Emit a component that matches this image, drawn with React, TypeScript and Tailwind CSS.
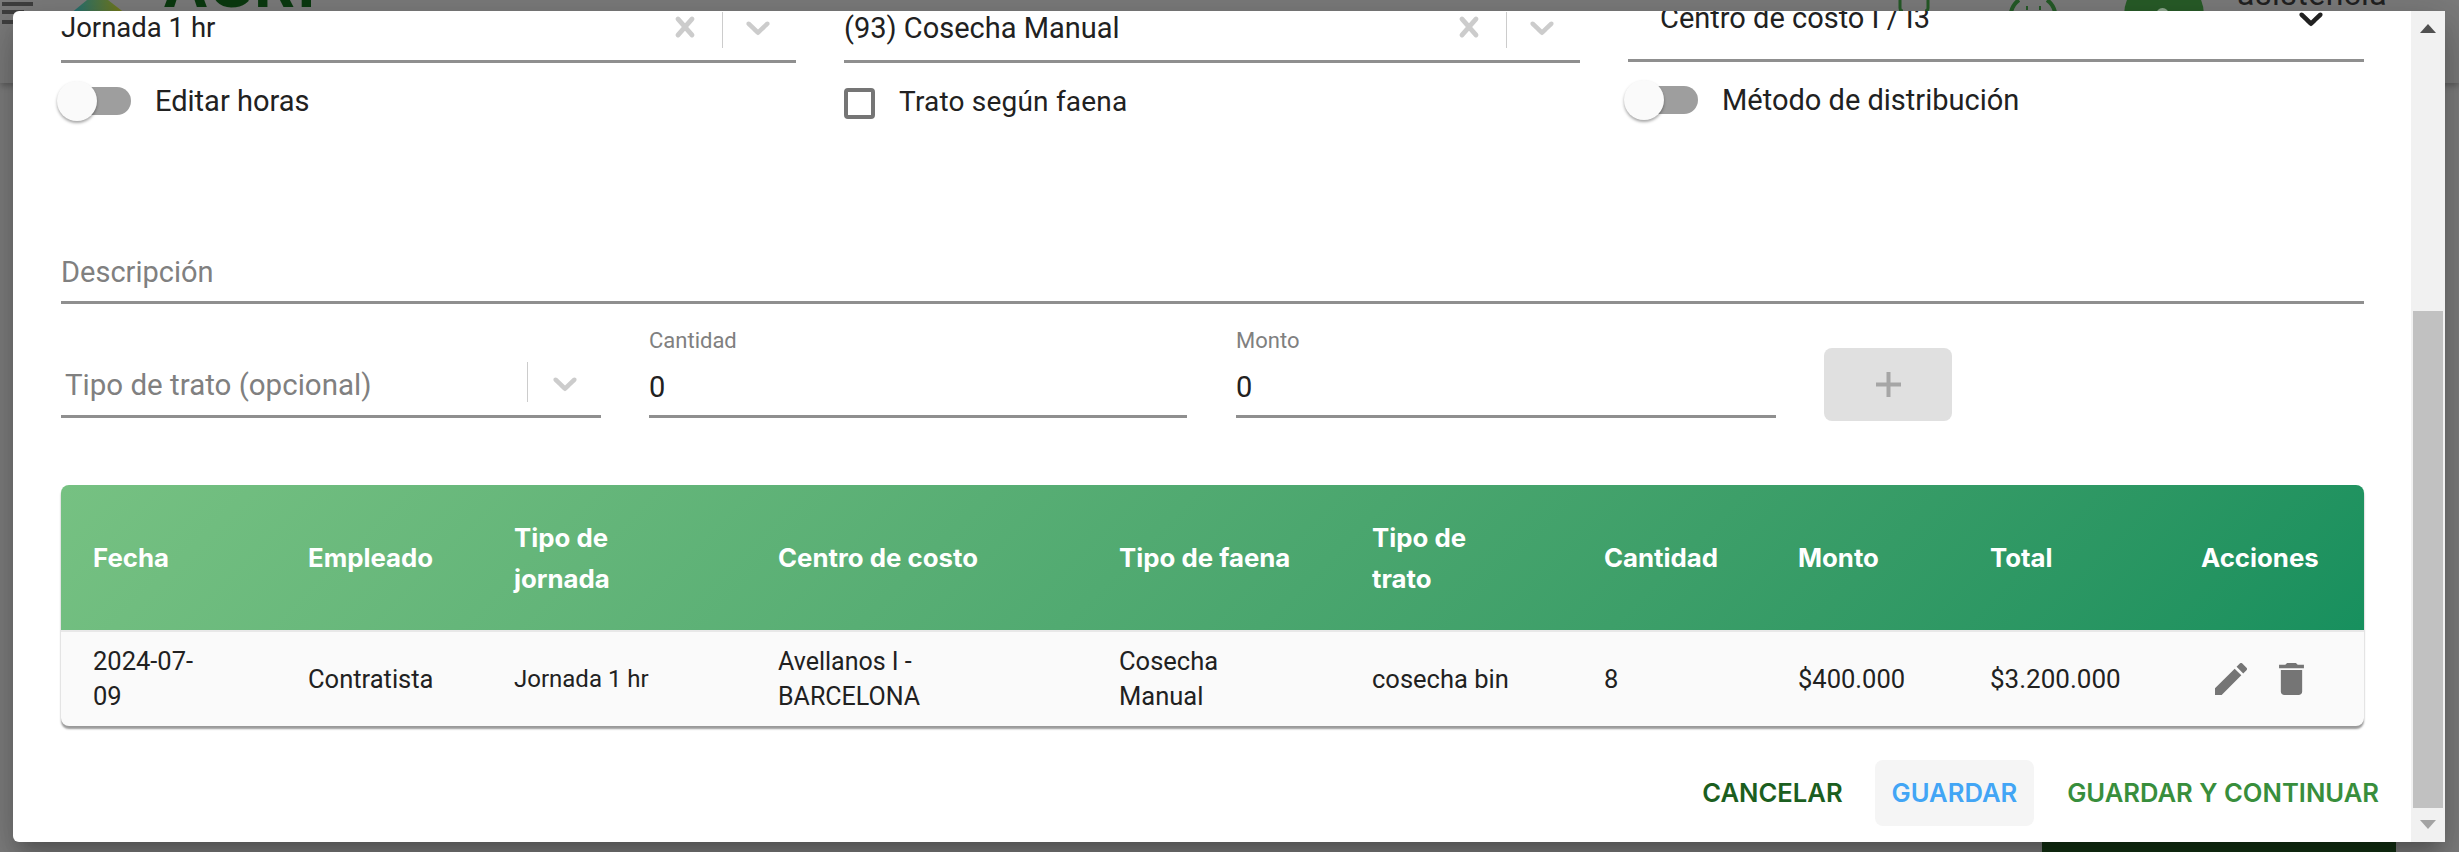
import React from "react";

const body = { fontFamily: '"Roboto", "Liberation Sans", sans-serif' };
const heading = { fontFamily: '"Inter", "Open Sans", sans-serif' };

function Chevron({ className = "text-[#cccccc]" }: { className?: string }) {
  return (
    <svg viewBox="0 0 20 20" className={`w-[40px] h-[40px] shrink-0 ${className}`} fill="currentColor">
      <path d="M4.516 7.548c.436-.446 1.043-.481 1.576 0L10 11.295l3.908-3.747c.533-.481 1.141-.446 1.574 0 .436.445.408 1.197 0 1.615-.406.418-4.695 4.502-4.695 4.502a1.095 1.095 0 0 1-1.576 0S4.924 9.581 4.516 9.163c-.409-.418-.436-1.17 0-1.615z" />
    </svg>
  );
}

function Cross() {
  return (
    <svg viewBox="0 0 20 20" className="w-[40px] h-[40px] shrink-0 text-[#cccccc]" fill="currentColor">
      <path d="M14.348 14.849a1.2 1.2 0 0 1-1.697 0L10 11.819l-2.651 3.029a1.2 1.2 0 1 1-1.697-1.697l2.758-3.15-2.759-3.152a1.2 1.2 0 1 1 1.697-1.697L10 8.183l2.651-3.031a1.2 1.2 0 1 1 1.697 1.697l-2.758 3.152 2.758 3.15a1.2 1.2 0 0 1 0 1.698z" />
    </svg>
  );
}

function Toggle({ label }: { label: string }) {
  return (
    <div className="flex items-center h-[40px] -ml-[4px]">
      <div className="relative w-[74px] h-[40px] shrink-0">
        <div className="absolute left-[4px] right-0 top-[6px] h-[28px] rounded-full bg-[#9e9e9e]" />
        <div className="absolute left-0 top-0 w-[40px] h-[40px] rounded-full bg-[#fafafa] shadow-[0_2px_3px_rgba(0,0,0,0.35)]" />
      </div>
      <span className="ml-[24px] text-[29px] leading-[40px] text-[#212121]">{label}</span>
    </div>
  );
}

function ClearableSelect({ value, size }: { value: string; size: string }) {
  return (
    <div className="h-[56px] border-b-[3px] border-[#8f8f8f] flex items-center">
      <span className={`flex-1 leading-[36px] text-[#212121] -mt-[12px] ${size}`}>{value}</span>
      <div className="-mt-[13px]"><Cross /></div>
      <div className="w-px h-[36px] ml-[17px] mr-[15px] -mt-[8px] bg-[#cccccc]" />
      <div className="-mt-[13px]"><Chevron /></div>
      <div className="w-[18px]" />
    </div>
  );
}

const cols = [
  "w-[215px]", "w-[206px]", "w-[264px]", "w-[341px]", "w-[253px]",
  "w-[232px]", "w-[194px]", "w-[192px]", "w-[211px]", "w-[195px]",
];
const headers: React.ReactNode[] = [
  "Fecha", "Empleado", <>Tipo de<br />jornada</>, "Centro de costo", "Tipo de faena",
  <>Tipo de<br />trato</>, "Cantidad", "Monto", "Total", "Acciones",
];
const row: { text: React.ReactNode; size: string }[] = [
  { text: <>2024-07-<br />09</>, size: "text-[25.5px]" },
  { text: "Contratista", size: "text-[25.5px]" },
  { text: "Jornada 1 hr", size: "text-[24px]" },
  { text: <>Avellanos I -<br />BARCELONA</>, size: "text-[25px]" },
  { text: <>Cosecha<br />Manual</>, size: "text-[25.5px]" },
  { text: "cosecha bin", size: "text-[25.5px]" },
  { text: "8", size: "text-[25.5px]" },
  { text: "$400.000", size: "text-[25.5px]" },
  { text: "$3.200.000", size: "text-[26px]" },
];

export default function App() {
  return (
    <div className="relative w-[2459px] h-[852px] overflow-hidden bg-[#7e7e7e]" style={body}>
      <div className="relative h-[83px] bg-[#7b7b7b] overflow-hidden shadow-[0_3px_6px_rgba(0,0,0,0.25)]">
        <div className="absolute left-[2px] top-[2px] w-[31px] h-[4px] bg-[#3f3f3f]" />
        <div className="absolute left-[2px] top-[10px] w-[22px] h-[4px] bg-[#3f3f3f]" />
        <div className="absolute left-[2px] top-[20px] w-[22px] h-[4px] bg-[#3f3f3f]" />
        <svg viewBox="0 0 56 14" className="absolute left-[70px] top-0 w-[56px] h-[14px]">
          <defs>
            <linearGradient id="logo" x1="0" x2="1" y1="0" y2="0">
              <stop offset="0" stopColor="#1f6f78" />
              <stop offset="1" stopColor="#7a7a12" />
            </linearGradient>
          </defs>
          <path d="M17 0h21l18 14H0z" fill="url(#logo)" />
        </svg>
        <span className="absolute left-[164px] -top-[46px] text-[64px] leading-[64px] font-bold tracking-[2px] text-[#0b3a10]">AGRI</span>
        <svg viewBox="0 0 32 12" className="absolute left-[1898px] top-0 w-[32px] h-[12px] text-[#255a27]" fill="none" stroke="currentColor" strokeWidth="3">
          <path d="M2 0v8q0 3 3 3M30 0v8q0 3-3 3" />
        </svg>
        <svg viewBox="0 0 50 12" className="absolute left-[2008px] top-0 w-[50px] h-[12px] text-[#255a27]" fill="none" stroke="currentColor" strokeWidth="4">
          <path d="M3 12q2-8 8-12M47 12q-2-8-8-12M18 8h2M31 8h2" />
        </svg>
        <div className="absolute left-[2124px] -top-[25px] w-[80px] h-[80px] rounded-full bg-[#285c28]" />
        <div className="absolute left-[2156px] top-[8px] w-[13px] h-[13px] rounded-full border-[3px] border-[#8fa88f]" />
        <span className="absolute left-[2237px] -top-[22px] text-[32px] leading-[32px] tracking-[0.5px] text-[#222222]">asistencia</span>
      </div>
      <div className="absolute left-[2042px] top-[842px] w-[354px] h-[10px] bg-[#143214]" />

      <div className="absolute left-[13px] top-[11px] w-[2432px] h-[831px] bg-white rounded-l-[6px] overflow-hidden flex shadow-[0_11px_15px_-7px_rgba(0,0,0,0.2),0_24px_38px_3px_rgba(0,0,0,0.14),0_9px_46px_8px_rgba(0,0,0,0.12)]">
        <div className="w-[2398px] shrink-0 pl-[48px] pr-[47px]">
          <div className="grid grid-cols-[735px_736px_736px] gap-x-[48px] -mt-[4px]">
            <div>
              <ClearableSelect value="Jornada 1 hr" size="text-[27.5px]" />
              <div className="mt-[18px]"><Toggle label="Editar horas" /></div>
            </div>
            <div>
              <ClearableSelect value="(93) Cosecha Manual" size="text-[29px]" />
              <div className="mt-[23px] flex items-center">
                <div className="w-[31px] h-[31px] rounded-[4px] border-[4px] border-[#757575]" />
                <span className="ml-[24px] -mt-[2px] text-[28px] leading-[36px] tracking-[0.2px] text-[#212121]">Trato según faena</span>
              </div>
            </div>
            <div>
              <div className="h-[55px] border-b-[3px] border-[#8f8f8f] flex items-start pl-[32px]">
                <span className="flex-1 text-[29px] leading-[36px] text-[#212121] -mt-[7px]">Centro de costo I / I3</span>
                <div className="-mt-[9px]"><Chevron className="text-[#212121]" /></div>
                <div className="w-[33px]" />
              </div>
              <div className="mt-[18px]"><Toggle label="Método de distribución" /></div>
            </div>
          </div>

          <div className="mt-[133px] h-[50px] border-b-[3px] border-[#8f8f8f] text-[29px] leading-[36px] text-[#808080]">Descripción</div>

          <div className="mt-[21px] flex items-end">
            <div className="w-[540px] h-[61px] border-b-[3px] border-[#8f8f8f] flex items-center pl-[4px]">
              <span className="flex-1 text-[29.5px] leading-[36px] text-[#808080] -mt-[2px]">Tipo de trato (opcional)</span>
              <div className="w-px h-[40px] -mt-[8px] bg-[#cccccc]" />
              <div className="w-[73px] flex justify-center -mt-[6px]"><Chevron /></div>
            </div>
            <div className="ml-[48px] w-[538px] border-b-[3px] border-[#8f8f8f] pt-[4px]">
              <div className="text-[22px] leading-[24px] text-[#808080]">Cantidad</div>
              <div className="mt-[16px] h-[46px] text-[29px] leading-[36px] text-[#212121]">0</div>
            </div>
            <div className="ml-[49px] w-[540px] border-b-[3px] border-[#8f8f8f] pt-[4px]">
              <div className="text-[22px] leading-[24px] text-[#808080]">Monto</div>
              <div className="mt-[16px] h-[46px] text-[29px] leading-[36px] text-[#212121]">0</div>
            </div>
            <button className="ml-[48px] -mb-[3px] w-[128px] h-[73px] rounded-[8px] bg-[#e0e0e0] flex items-center justify-center">
              <svg viewBox="0 0 25 25" className="w-[25px] h-[25px] text-[#a6a6a6]" fill="currentColor"><path d="M10.5 0h4v10.5H25v4H14.5V25h-4V14.5H0v-4h10.5z" /></svg>
            </button>
          </div>

          <div className="mt-[67px] rounded-[8px] overflow-hidden bg-[#fafafa] shadow-[0_3px_2px_rgba(0,0,0,0.4)]">
            <table className="w-[2303px] table-fixed border-collapse">
              <colgroup>{cols.map((c) => <col key={c} className={c} />)}</colgroup>
              <thead className="bg-linear-135 from-[#76c182] to-[#17905e]">
                <tr className="h-[146px]">
                  {headers.map((h, i) => (
                    <th key={i} className="px-[32px] text-left font-bold text-white text-[25.8px] leading-[41px]" style={heading}>{h}</th>
                  ))}
                </tr>
              </thead>
              <tbody>
                <tr className="h-[95px] border-t-[2px] border-[#e8e8e8]">
                  {row.map((c, i) => (
                    <td key={i} className={`px-[32px] leading-[35px] text-[#212121] ${c.size}`}>{c.text}</td>
                  ))}
                  <td className="px-[32px]">
                    <div className="flex items-center gap-[32px] pl-[14px]">
                      <svg viewBox="3 3 18 18" className="w-[32px] h-[32px] text-[#757575]" fill="currentColor"><path d="M3 17.25V21h3.75L17.81 9.94l-3.75-3.75L3 17.25zM20.71 7.04a1 1 0 0 0 0-1.41l-2.34-2.34a1 1 0 0 0-1.41 0l-1.83 1.83 3.75 3.75 1.83-1.83z" /></svg>
                      <svg viewBox="5 3 14 18" className="w-[25px] h-[32px] text-[#757575]" fill="currentColor"><path d="M6 19c0 1.1.9 2 2 2h8c1.1 0 2-.9 2-2V7H6v12zM19 4h-3.5l-1-1h-5l-1 1H5v2h14V4z" /></svg>
                    </div>
                  </td>
                </tr>
              </tbody>
            </table>
          </div>

          <div className="mt-[34px] flex items-center justify-end -mr-[31px] text-[25.6px] font-semibold" style={heading}>
            <button className="px-[16px] h-[66px] text-[#1b5e20]">CANCELAR</button>
            <button className="ml-[16px] px-[17px] h-[66px] rounded-[8px] bg-[#f5f5f5] text-[#42a5f5]">GUARDAR</button>
            <button className="ml-[17px] px-[16px] h-[66px] text-[#388e3c]">GUARDAR Y CONTINUAR</button>
          </div>
        </div>

        <div className="relative w-[34px] shrink-0 bg-[#f1f1f1]">
          <div className="absolute left-[2px] top-[300px] w-[30px] h-[497px] bg-[#c1c1c1]" />
          <svg viewBox="0 0 16 9" className="absolute left-[9px] top-[13px] w-[16px] h-[9px] text-[#505050]" fill="currentColor"><path d="M8 0l8 9H0z" /></svg>
          <svg viewBox="0 0 16 9" className="absolute left-[9px] top-[809px] w-[16px] h-[9px] text-[#a3a3a3]" fill="currentColor"><path d="M0 0h16L8 9z" /></svg>
        </div>
      </div>
    </div>
  );
}
